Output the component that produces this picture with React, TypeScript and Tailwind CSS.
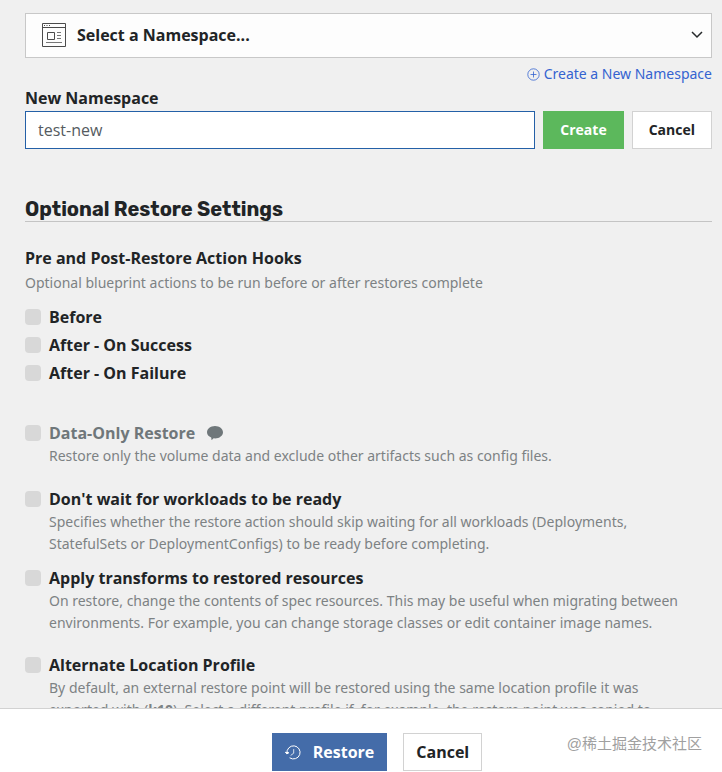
import { useState, type ReactNode } from 'react';

const CHECKBOX =
  'size-4 shrink-0 appearance-none rounded-sm bg-[#d8d8d8] checked:bg-[#446ca9]';

const HINT = "font-['Noto_Sans','Open_Sans',sans-serif] text-sm leading-[22px] text-[#7d8284]";

function NamespaceIcon() {
  return (
    <svg width="24" height="24" viewBox="0 0 24 24" fill="none" stroke="#4b4b4b" className="shrink-0" aria-hidden="true">
      <path d="M.5.5h23v23H.5zM.5 4.5h23" />
      <path d="M2 2.500h1M4.500 2.500h1M7 2.500h1" />
      <path d="M5.500 9.500h7v7h-7z" />
      <path d="M15 9.500h4M15 12.500h4M15 15.500h4M4 19.500h16" stroke="#777" />
    </svg>
  );
}

function ChevronIcon() {
  return (
    <svg width="12" height="8" viewBox="0 0 12 8" fill="none" stroke="#26292b" strokeWidth="1.5" className="pointer-events-none shrink-0" aria-hidden="true">
      <path d="M1 1l5 5 5-5" />
    </svg>
  );
}

function PlusCircleIcon() {
  return (
    <svg width="13" height="13" viewBox="0 0 13 13" fill="none" stroke="currentColor" strokeWidth="0.8" aria-hidden="true">
      <circle cx="6.5" cy="6.5" r="5.7" />
      <path d="M6.5 3.500v6M3.500 6.500h6" />
    </svg>
  );
}

function CommentIcon() {
  return (
    <svg width="16" height="14" viewBox="0 0 16 14" fill="#6f777a" aria-hidden="true">
      <path d="M8 0c4.400 0 8 2.800 8 6.200s-3.600 6.200-8 6.200c-.5 0-1 0-1.400-.1L4.600 14.200 4.200 11.500C1.700 10.500 0 8.500 0 6.200 0 2.800 3.600 0 8 0z" />
    </svg>
  );
}

function RestoreIcon() {
  return (
    <svg width="16" height="15" viewBox="0 0 16 15" fill="none" stroke="#fff" strokeLinecap="round" aria-hidden="true">
      <path d="M1.900 8.200A6.600 6.600 0 1 1 4.900 13" />
      <path d="M.6 7.600l1.300 1.300 1.600-1z" fill="#fff" />
      <path d="M8.700 4.500v3.700l-2.700 2" strokeWidth="0.8" />
    </svg>
  );
}

type SettingProps = {
  id: string;
  title: string;
  disabled?: boolean;
  badge?: ReactNode;
  className?: string;
  children: ReactNode;
};

function Setting({ id, title, disabled, badge, className = '', children }: SettingProps) {
  return (
    <div className={`flex gap-2 ${className}`}>
      <input id={id} type="checkbox" disabled={disabled} className={`${CHECKBOX} mt-1`} />
      <div className="max-w-[644px]">
        <div className="flex items-center gap-3">
          <label htmlFor={id} className={`font-bold ${disabled ? 'text-[#6f777a]' : ''}`}>
            {title}
          </label>
          {badge}
        </div>
        <p className={HINT}>{children}</p>
      </div>
    </div>
  );
}

const hooks = [
  { id: 'before', label: 'Before' },
  { id: 'after-success', label: 'After - On Success' },
  { id: 'after-failure', label: 'After - On Failure' },
];

export default function App() {
  const [name, setName] = useState('test-new');

  return (
    <div className="flex h-screen flex-col bg-[#f0f0f0] font-['Open_Sans',sans-serif] text-base text-[#212426]">
      <main className="min-h-0 flex-1 overflow-hidden pt-[13px] pr-2.5 pl-[25px]">
        <div className="flex items-center border border-[#c8c8c8] bg-[#fdfdfd] pr-2 pb-0.5 pl-4">
          <NamespaceIcon />
          <select
            aria-label="Namespace"
            className="h-[41px] min-w-0 flex-1 appearance-none bg-transparent pl-[11px] font-bold outline-none"
          >
            <option>Select a Namespace...</option>
          </select>
          <ChevronIcon />
        </div>

        <div className="mt-[5px] flex justify-end">
          <a
            href="#new-namespace"
            className="flex items-center gap-1 font-['Noto_Sans','Open_Sans',sans-serif] text-sm leading-[22px] text-[#3463d0]"
          >
            <PlusCircleIcon />
            Create a New Namespace
          </a>
        </div>

        <label htmlFor="new-namespace" className="block py-px font-bold">
          New Namespace
        </label>
        <div className="flex gap-2">
          <input
            id="new-namespace"
            type="text"
            value={name}
            onChange={(e) => setName(e.target.value)}
            className="h-[38px] min-w-0 flex-1 border border-[#2460a7] bg-white px-3 text-[#555b61] outline-none"
          />
          <button type="button" className="h-[38px] border border-[#5cb85c] bg-[#5cb85c] px-4 text-sm font-bold text-white">
            Create
          </button>
          <button type="button" className="h-[38px] border border-[#d2d2d2] bg-white px-4 text-sm font-bold">
            Cancel
          </button>
        </div>

        <h2 className="mt-12 border-b border-[#c4c4c4] font-['Rubik','Inter',sans-serif] text-xl leading-6 font-bold">
          Optional Restore Settings
        </h2>

        <h3 className="mt-6 font-bold">Pre and Post-Restore Action Hooks</h3>
        <p className={`mt-0.5 ${HINT}`}>Optional blueprint actions to be run before or after restores complete</p>
        <div className="mt-[11px] flex flex-col gap-1">
          {hooks.map((hook) => (
            <div key={hook.id} className="flex items-center gap-2">
              <input id={hook.id} type="checkbox" className={CHECKBOX} />
              <label htmlFor={hook.id} className="font-bold">
                {hook.label}
              </label>
            </div>
          ))}
        </div>

        <Setting id="data-only" title="Data-Only Restore" disabled badge={<CommentIcon />} className="mt-9">
          Restore only the volume data and exclude other artifacts such as config files.
        </Setting>
        <Setting id="no-wait" title="Don't wait for workloads to be ready" className="mt-5">
          Specifies whether the restore action should skip waiting for all workloads (Deployments, StatefulSets or
          DeploymentConfigs) to be ready before completing.
        </Setting>
        <Setting id="transforms" title="Apply transforms to restored resources" className="mt-[11px]">
          On restore, change the contents of spec resources. This may be useful when migrating between environments. For
          example, you can change storage classes or edit container image names.
        </Setting>
        <Setting id="location-profile" title="Alternate Location Profile" className="mt-[19px]">
          By default, an external restore point will be restored using the same location profile it was exported with (
          <strong className="font-bold">k10</strong>). Select a different profile if, for example, the restore point was
          copied to another location.
        </Setting>
      </main>

      <footer className="relative flex shrink-0 justify-center gap-4 border-t border-[#d2d2d2] bg-white pt-6 pb-px pl-8">
        <button
          type="button"
          className="flex h-[38px] items-center gap-3 border border-[#446ca9] bg-[#446ca9] px-3 font-bold text-white"
        >
          <RestoreIcon />
          Restore
        </button>
        <button type="button" className="h-[38px] border border-[#d2d2d2] bg-white px-3 font-bold">
          Cancel
        </button>
        <span className="absolute right-5 bottom-4 font-['Liberation_Sans','Noto_Sans_CJK_SC',sans-serif] text-[15px] leading-6 text-[#a0a0a0]">
          @稀土掘金技术社区
        </span>
      </footer>
    </div>
  );
}
